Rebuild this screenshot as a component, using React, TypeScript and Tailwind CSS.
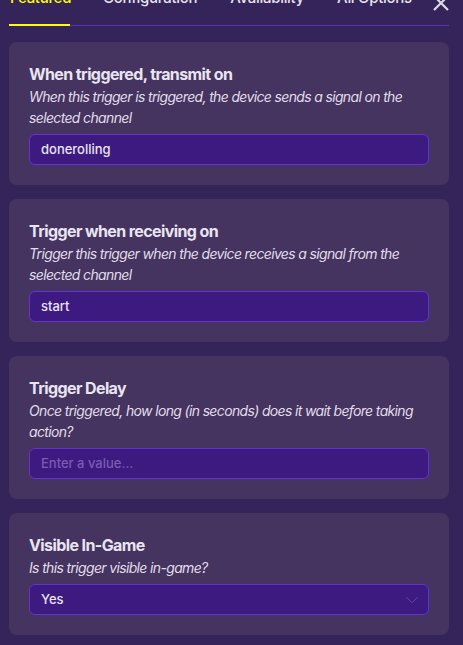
import { ChevronDown } from "lucide-react"

type Field = {
  title: string
  description: string
  value?: string
  placeholder?: string
  select?: boolean
}

const fields: Field[] = [
  {
    title: "When triggered, transmit on",
    description: "When this trigger is triggered, the device sends a signal on the selected channel",
    value: "donerolling",
  },
  {
    title: "Trigger when receiving on",
    description: "Trigger this trigger when the device receives a signal from the selected channel",
    value: "start",
  },
  {
    title: "Trigger Delay",
    description: "Once triggered, how long (in seconds) does it wait before taking action?",
    placeholder: "Enter a value...",
  },
  {
    title: "Visible In-Game",
    description: "Is this trigger visible in-game?",
    value: "Yes",
    select: true,
  },
]

const tabs = ["Featured", "Configuration", "Availability", "All Options"]

function FieldCard({ field }: { field: Field }) {
  return (
    <div className="rounded-lg bg-[#44345f] px-5 pb-5 pt-5">
      <div className="text-[16px] font-bold leading-6 tracking-[-0.6px] text-[#e9e5f0]">{field.title}</div>
      <div className="pr-[2px] text-[14px] italic leading-[21px] tracking-[-0.65px] text-[#e2dcea]">
        {field.description}
      </div>
      <div className="mt-[6px] flex h-[31px] items-center justify-between rounded-md border border-[#6431d6] bg-[#3d1a80] pl-[11px] pr-[5px] text-[13px] font-medium">
        {field.value ? (
          <span className="text-[#e9e4f2]">{field.value}</span>
        ) : (
          <span className="text-[#7a5bb5]">{field.placeholder}</span>
        )}
        {field.select && <ChevronDown size={22} strokeWidth={0.8} className="text-[#7254b0]" />}
      </div>
    </div>
  )
}

export default function App() {
  return (
    <div className="h-[645px] w-[463px] overflow-hidden bg-[#35245a] font-['Inter',sans-serif]">
      <div className="relative ml-[9px] w-[440px]">
        <div className="-mt-[14px] flex h-[40px] items-start whitespace-nowrap border-b border-[#5a2fc0] text-[15px] font-medium leading-6 tracking-[-0.3px]">
          {tabs.map((tab, i) => (
            <div
              key={tab}
              className={
                i === 0
                  ? "mr-[33px] h-[40px] w-[61px] border-b-2 border-[#ffff00] pl-[1px] text-[#ffff00]"
                  : "mr-[33px] text-[#e6e2ee]"
              }
            >
              {tab}
            </div>
          ))}
        </div>
        <svg
          className="absolute right-0 top-[9px]"
          width="16"
          height="16"
          viewBox="0 0 16 16"
          fill="none"
          stroke="#dcd8e4"
          strokeWidth="2.2"
        >
          <path d="M1 1L15 15M15 1L1 15" />
        </svg>
        <div className="mt-[16px] flex flex-col gap-[14px]">
          {fields.map((f) => (
            <FieldCard key={f.title} field={f} />
          ))}
        </div>
      </div>
    </div>
  )
}
